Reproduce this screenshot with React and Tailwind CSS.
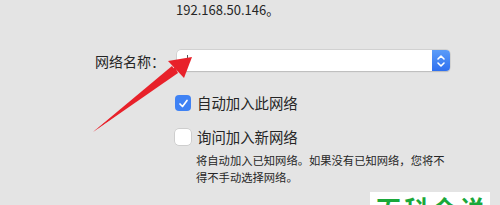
import React from 'react';

const font = { fontFamily: '"Noto Sans CJK SC", "Noto Sans", sans-serif' };

const App = () => {
  return (
    <div className="relative w-[500px] h-[205px] overflow-hidden bg-[#e4e4e4] text-[#262626]" style={font}>
      <div className="pl-[176px] pt-[1px] text-[13px] leading-[18px]">192.168.50.146。</div>

      <div className="flex items-center mt-[31px] pl-[95px]">
        <span className="w-[82px] text-[14px] leading-[20px]">网络名称：</span>
        <div className="flex h-[21px] w-[273px] rounded-[4px] shadow-[0_0_0_0.5px_#c4c4c4,0_0.5px_1px_rgba(0,0,0,0.2)] bg-white">
          <div className="flex-1 flex items-center pl-[10px]">
            <span className="w-px h-[12px] bg-[#555]"></span>
          </div>
          <div className="w-[18px] h-full rounded-r-[4px] bg-gradient-to-b from-[#5b9cf8] to-[#2f6fef] flex items-center justify-center">
            <svg width="10" height="14" viewBox="0 0 10 14" fill="none" stroke="white" strokeWidth="1.6" strokeLinecap="round" strokeLinejoin="round">
              <path d="M2 5 L5 2 L8 5" />
              <path d="M2 9 L5 12 L8 9" />
            </svg>
          </div>
        </div>
      </div>

      <div className="pl-[175px] mt-[22px] flex items-center gap-[6px]">
        <div className="w-[16px] h-[16px] rounded-[4px] bg-[#3f82f4] flex items-center justify-center">
          <svg width="11" height="11" viewBox="0 0 11 11" fill="none" stroke="white" strokeWidth="1.7" strokeLinecap="round" strokeLinejoin="round">
            <path d="M2 6 L4.5 8.5 L9 2.5" />
          </svg>
        </div>
        <span className="text-[14.4px] leading-[20px]">自动加入此网络</span>
      </div>

      <div className="pl-[175px] mt-[14px] flex items-center gap-[6px]">
        <div className="w-[16px] h-[16px] rounded-[4px] bg-white shadow-[0_0_0_0.5px_#b8b8b8]"></div>
        <span className="text-[14.4px] leading-[20px]">询问加入新网络</span>
      </div>

      <div className="pl-[196px] mt-[5px] text-[11.3px] leading-[17px]">
        <div>将自动加入已知网络。如果没有已知网络，您将不</div>
        <div>得不手动选择网络。</div>
      </div>

      <div className="absolute left-[370px] top-[192px] w-[120px] h-[20px] bg-white overflow-hidden">
        <div className="pl-[6px] pt-[4px] text-[25px] leading-[25px] font-bold text-[#1aa83a] tracking-[3px] whitespace-nowrap">百科全说</div>
      </div>

      <svg className="absolute left-0 top-0" width="500" height="205" viewBox="0 0 500 205">
        <path d="M93 132 L176 72 L172 66 Z" fill="#e8212a" />
        <path d="M192 57 L168 61 L184 78 Z" fill="#e8212a" />
        <path d="M93 132 L178 73 L175 67 Z" fill="#e8212a" />
      </svg>
    </div>
  );
};

export default App;
